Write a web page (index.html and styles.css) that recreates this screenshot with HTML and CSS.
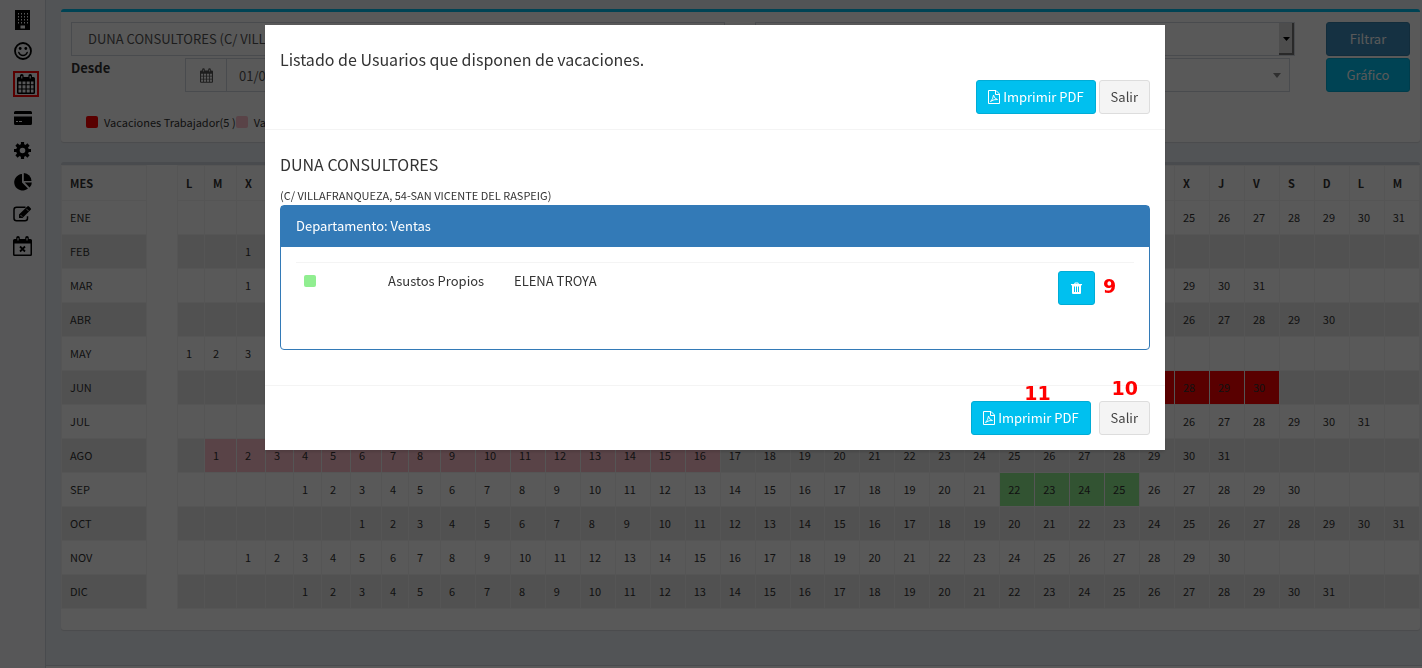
FILE: index.html
```html
<!DOCTYPE html>
<html lang="es">
<head>
<meta charset="utf-8">
<title>Vacaciones</title>
<link rel="stylesheet" href="styles.css">
</head>
<body>
<div class="page">
  <nav class="sidebar" aria-label="Menú principal">
    <a href="#" aria-label="Empresas"><svg width="18" height="20" viewBox="0 0 18 20"><path d="M1 0h15v20H1z"/><g fill="#fff"><path d="M4 3h1v1.500H4zM7 3h1v1.500H7zM10 3h1v1.500H10zM13 3h1v1.500H13zM4 6h1v1.500H4zM7 6h1v1.500H7zM10 6h1v1.500H10zM13 6h1v1.500H13zM4 9h1v1.500H4zM7 9h1v1.500H7zM10 9h1v1.500H10zM13 9h1v1.500H13zM4 12h1v1.500H4zM7 12h1v1.500H7zM10 12h1v1.500H10zM13 12h1v1.500H13zM6.500 15.500h4.500V18.500h-4.500z"/></g></svg></a>
    <a href="#" aria-label="Empleados"><svg width="18" height="18" viewBox="0 0 18 18"><circle cx="9" cy="9" r="8" fill="none" stroke="#000" stroke-width="1.800"/><circle cx="6.200" cy="6.500" r="1.400"/><circle cx="11.800" cy="6.500" r="1.400"/><path d="M4.800 10.500q1.200 3 4.200 3t4.200-3" fill="none" stroke="#000" stroke-width="1.400" stroke-linecap="round"/></svg></a>
    <a href="#" class="active" aria-label="Calendario"><svg width="18" height="20" viewBox="0 0 18 20"><use href="#calendar"/></svg></a>
    <a href="#" aria-label="Tarjetas"><svg width="18" height="14" viewBox="0 0 18 14"><path d="M1.500 0h15Q18 0 18 1.500V3H0V1.500Q0 0 1.500 0zM0 5.500h18v7q0 1.500-1.500 1.500h-15Q0 14 0 12.500z"/><path d="M2 10.500h2M5 10.500h3" stroke="#fff" stroke-width="1"/></svg></a>
    <a href="#" aria-label="Configuración"><svg width="17" height="17" viewBox="0 0 17 17"><circle cx="8.500" cy="8.500" r="4.600" fill="none" stroke="#000" stroke-width="3.600"/><path d="M8.500 0v3M8.500 14v3M0 8.500h3M14 8.500h3M2.500 2.500l2 2M12.500 12.500l2 2M14.500 2.500l-2 2M4.500 12.500l-2 2" stroke="#000" stroke-width="3.200"/></svg></a>
    <a href="#" aria-label="Informes"><svg width="18" height="18" viewBox="0 0 18 18"><path d="M8 1v8.500l6 6A8.300 8.300 0 1 1 8 1z"/><path d="M9.800 0A8 8 0 0 1 17.500 8H9.800z"/><path d="M10.800 9.500h7q0 3.200-2.200 5z"/></svg></a>
    <a href="#" aria-label="Editar"><svg width="19" height="16" viewBox="0 0 19 16"><path d="M12.500 1.200H3.500Q1 1.200 1 3.700v8.500q0 2.500 2.500 2.500H12q2.500 0 2.500-2.500v-2" fill="none" stroke="#000" stroke-width="1.500"/><path d="M6 8.500L14.300.500q.8-.8 1.700 0l1.700 1.700q.8.800 0 1.600L9.500 12H6z"/><path d="M7.500 9l1.800 1.800M13.300 2.800l2.400 2.400" stroke="#fff" stroke-width=".8"/></svg></a>
    <a href="#" aria-label="Ausencias"><svg width="19" height="20" viewBox="0 0 19 20"><path d="M0 4.500Q0 3 1.500 3h16Q19 3 19 4.500v14q0 1.500-1.500 1.500h-16Q0 20 0 18.500zM1.500 7.500v11h16v-11z" fill-rule="evenodd"/><path d="M5 1.800v3M14 1.800v3" stroke="#000" stroke-width="3.600" stroke-linecap="round"/><path d="M5 2v2.500M14 2v2.500" stroke="#fff" stroke-width="1"/><path d="M7 10.500l5 5M12 10.500l-5 5" stroke="#000" stroke-width="1.800"/></svg></a>
  </nav>
  <div class="main">
    <main class="content">
      <section class="box box-info">
        <form class="filters">
          <div class="fields">
            <div class="field-row">
              <select class="control centre" aria-label="Centro"><option>DUNA CONSULTORES (C/ VILLAFRANQUEZA, 54-SAN VICENTE DEL RASPEIG)</option></select>
              <select class="control classic" aria-label="Departamento"><option></option></select>
            </div>
            <div class="field-row second">
              <label class="caption" for="desde">Desde</label>
              <div class="input-group">
                <span class="addon"><svg width="13" height="15" viewBox="0 0 18 20"><use href="#calendar"/></svg></span>
                <input id="desde" class="control" type="text" value="01/01/2018">
              </div>
              <select class="control arrow" aria-label="Tipo"><option></option></select>
            </div>
          </div>
          <div class="actions">
            <button type="button" class="btn primary">Filtrar</button>
            <button type="button" class="btn info">Gráfico</button>
          </div>
        </form>
        <ul class="legend">
          <li><span class="swatch red"></span>Vacaciones Trabajador(5 )</li>
          <li><span class="swatch pink"></span>Vacaciones Empresa(16)</li>
        </ul>
      </section>
      <section class="box box-calendar">
        <table class="calendar">
          <colgroup><col class="month"><col class="spacer"><col class="w27"><col class="w32"><col class="w29"><col class="w28"><col class="w28"><col class="w29"><col class="w31"><col class="w27"><col class="w32"><col span="28"></colgroup>
          <thead><tr id="head"><th scope="col">MES</th><td class="gap"></td></tr></thead>
          <tbody id="months"></tbody>
        </table>
      </section>
    </main>
    <footer class="footer"></footer>
  </div>
</div>

<div class="backdrop">
  <div class="dialog" role="dialog" aria-modal="true" aria-labelledby="title">
    <header class="dialog-head">
      <h4 id="title">Listado de Usuarios que disponen de vacaciones.</h4>
      <div class="buttons">
        <button type="button" class="btn info"><svg width="12" height="14" viewBox="0 0 12 14"><use href="#pdf"/></svg> Imprimir PDF</button>
        <button type="button" class="btn default">Salir</button>
      </div>
    </header>
    <div class="dialog-body">
      <h4>DUNA CONSULTORES</h4>
      <p class="address">(C/ VILLAFRANQUEZA, 54-SAN VICENTE DEL RASPEIG)</p>
      <section class="panel">
        <div class="panel-head">Departamento: Ventas</div>
        <div class="panel-body">
          <div class="person">
            <span class="swatch green"></span>
            <span class="kind">Asustos Propios</span>
            <span class="name">ELENA TROYA</span>
            <div class="marked">
              <button type="button" class="btn info delete" aria-label="Eliminar"><svg width="11" height="12" viewBox="0 0 11 12"><path d="M0 2h3L4 .5h3L8 2h3v1.200h-1V11q0 1-1 1H2q-1 0-1-1V3.200H0zM4.200 2h2.600l-.4-.6H4.600z" fill="#fff" fill-rule="evenodd"/><path d="M3.500 4.500v5.500M5.500 4.500v5.500M7.500 4.500v5.500" stroke="#00c0ef"/></svg></button>
              <b class="mark beside">9</b>
            </div>
          </div>
        </div>
      </section>
    </div>
    <footer class="dialog-foot">
      <div class="marked"><button type="button" class="btn info"><svg width="12" height="14" viewBox="0 0 12 14"><use href="#pdf"/></svg> Imprimir PDF</button><b class="mark over">11</b></div>
      <div class="marked"><button type="button" class="btn default">Salir</button><b class="mark above">10</b></div>
    </footer>
  </div>
</div>

<svg class="symbols" aria-hidden="true">
  <defs>
    <g id="calendar"><path fill="currentColor" d="M0 4.500Q0 3 1.500 3h15Q18 3 18 4.500v14q0 1.500-1.500 1.500h-15Q0 20 0 18.500zM1.500 7.500v2.800h2.800V7.500zm4 0v2.800h3V7.500zm4.200 0v2.800h3V7.500zm4.200 0v2.800h2.600V7.500zM1.500 11.300v3.100h2.800v-3.100zm4 0v3.100h3v-3.100zm4.200 0v3.100h3v-3.100zm4.200 0v3.100h2.600v-3.100zM1.500 15.500v3h2.800v-3zm4 0v3h3v-3zm4.200 0v3h3v-3zm4.200 0v3h2.600v-3z" fill-rule="evenodd"/><path d="M4.800 1.800v3M13.200 1.800v3" stroke="currentColor" stroke-width="3.600" stroke-linecap="round"/><path d="M4.800 2v2.500M13.200 2v2.500" stroke="#fff" stroke-width="1"/></g>
    <g id="pdf" fill="none" stroke="#fff"><path d="M.5.500h7.500l3.500 3.500v9.500H.5zM7.500.500V4.500h4"/><path d="M2.500 11.500Q5 9.500 5.500 5q.5 3.500 4 4.500-3.500-.5-7 2" stroke-width=".9"/></g>
  </defs>
</svg>
<script src="calendar.js"></script>
</body>
</html>
```
FILE: styles.css
```css
* { box-sizing: border-box; }

body {
  margin: 0;
  overflow: hidden;
  color: #333;
  font: 13px/20px "Noto Sans CJK SC", "Noto Sans CJK JP", sans-serif;
}

h4, p, ul { margin: 0; font-weight: 400; }

button, input, select { font: inherit; color: inherit; }

svg { display: block; }

.symbols { position: absolute; width: 0; height: 0; }

.page {
  display: flex;
  height: 100vh;
  overflow: hidden;
  background: #ecf0f5;
}

.sidebar {
  display: flex;
  flex: none;
  flex-direction: column;
  align-items: center;
  width: 46px;
  padding-top: 7px;
  border-right: 1px solid #d2d6de;
  background: #f9fafc;
}

.sidebar a {
  display: grid;
  place-items: center;
  width: 26px;
  height: 26px;
  margin-bottom: 5px;
  color: #000;
}

.sidebar .active {
  margin: 2px 0 8px 6px;
  border: 2px solid #f00;
}

.sidebar .active ~ a { margin-bottom: 6px; }

.main { flex: 1; min-width: 0; }

.content { padding: 9px 2px 15px 15px; }

.box {
  margin-bottom: 20px;
  border-top: 3px solid #d2d6de;
  border-radius: 3px;
  background: #fff;
  box-shadow: 0 1px 1px rgba(0, 0, 0, .1);
}

.box-info {
  padding: 10px;
  border-top-color: #00c0ef;
}

.box-calendar { padding-bottom: 21px; }

.filters { display: flex; }

.fields {
  display: grid;
  flex: 1;
  gap: 2px;
}

.field-row {
  display: flex;
  gap: 30px;
}

.second { padding-right: 5px; }

.control {
  flex: 9;
  min-width: 0;
  height: 34px;
  padding: 0 12px;
  border: 1px solid #d2d6de;
  border-radius: 0;
  background: #fff;
  color: #555;
  appearance: none;
}

.centre { flex: 11; }

select.control { padding-left: 16px; }

.classic {
  background: url("data:image/svg+xml,%3Csvg xmlns='http://www.w3.org/2000/svg' width='15' height='32'%3E%3Crect width='15' height='32' fill='%23777'/%3E%3Crect width='13' height='30' fill='%23ddd'/%3E%3Cpath d='M4 14h7l-3.500 4z'/%3E%3C/svg%3E") right / 15px 32px no-repeat #fff;
}

.arrow {
  background: url("data:image/svg+xml,%3Csvg xmlns='http://www.w3.org/2000/svg' width='8' height='5'%3E%3Cpath d='M0 0h8L4 5z' fill='%23888'/%3E%3C/svg%3E") right 8px center / 8px 5px no-repeat #fff;
}

.caption {
  width: 84px;
  font-weight: 700;
}

.input-group { display: flex; flex: 9; }

.addon {
  display: grid;
  place-items: center;
  width: 41px;
  border: 1px solid #d2d6de;
  border-right: 0;
  color: #555;
}

.actions {
  display: grid;
  gap: 2px;
  width: 84px;
  margin-left: 31px;
}

.btn {
  display: flex;
  align-items: center;
  justify-content: center;
  gap: 3px;
  height: 34px;
  padding: 0 11px;
  border: 1px solid;
  border-radius: 3px;
  color: #fff;
  white-space: nowrap;
}

.primary { border-color: #367fa9; background: #3c8dbc; }
.info { border-color: #00acd6; background: #00c0ef; }
.default { border-color: #ddd; background: #f4f4f4; color: #444; }
.delete { width: 37px; }

.legend {
  display: flex;
  padding: 20px 15px 0;
  list-style: none;
  font-size: 11px;
}

.legend li {
  display: flex;
  align-items: center;
  gap: 6px;
}

.swatch {
  width: 12px;
  height: 12px;
  border-radius: 2px;
}

.red { background: #f00; }
.pink { background: #ffc0cb; }
.green { background: #90ee90; }

.calendar {
  width: 100%;
  border-collapse: collapse;
  table-layout: fixed;
  font-size: 11px;
  line-height: 17px;
}

.month { width: 85px; }
.spacer { width: 31px; }
.w27 { width: 27px; }
.w28 { width: 28px; }
.w29 { width: 29px; }
.w31 { width: 31px; }
.w32 { width: 32px; }

.calendar th,
.calendar td {
  height: 34px;
  padding: 8px;
  border: 1px solid #f4f4f4;
  text-align: left;
  font-weight: 400;
}

.calendar thead th {
  padding-top: 9px;
  font-weight: 700;
}
.calendar tbody tr:nth-child(even) { background: #e7e7e7; }
.calendar .gap { background: #fff; border-top: 0; border-bottom: 0; }
.calendar .red { background: #f00; }
.calendar .pink { background: #ffc0cb; }
.calendar .green { background: #90ee90; }

.footer {
  height: 51px;
  border-top: 1px solid #d2d6de;
  background: #fff;
}

.backdrop {
  position: fixed;
  inset: 0;
  padding: 25px 0 0 8px;
  background: rgba(0, 0, 0, .65);
}

.dialog {
  width: 900px;
  max-width: 100%;
  margin: 0 auto;
  background: #fff;
  box-shadow: 0 2px 3px rgba(0, 0, 0, .125);
}

.dialog-head {
  padding: 24px 15px 15px;
  border-bottom: 1px solid #f4f4f4;
}

h4 { font-size: 16px; }

.buttons {
  display: flex;
  justify-content: flex-end;
  gap: 3px;
  margin-top: 11px;
}

.dialog-body { padding: 24px 15px 35px; }

.address {
  margin-top: 11px;
  font-size: 11px;
}

.panel {
  border: 1px solid #337ab7;
  border-radius: 4px;
}

.panel-head {
  padding: 10px 15px 11px;
  background: #337ab7;
  color: #fff;
}

.panel-body { padding: 15px 15px 44px; }

.person {
  display: flex;
  align-items: flex-start;
  padding: 8px 39px 0 8px;
  border-top: 1px solid #f4f4f4;
}

.person .swatch { margin-top: 4px; }
.kind { width: 126px; margin-left: 72px; }
.name { flex: 1; }

.marked { position: relative; }

.mark {
  position: absolute;
  color: #f00;
  font: 700 19px/20px "DejaVu Sans", sans-serif;
}

.beside { top: 5px; left: 45px; }
.over { top: -18px; left: 53px; }
.above { top: -23px; left: 13px; }

.dialog-foot {
  display: flex;
  justify-content: flex-end;
  gap: 8px;
  padding: 15px;
  border-top: 1px solid #f4f4f4;
}
```
FILE: calendar.js
```js
const months = [
  { name: "ENE", start: 7, days: 31 },
  { name: "FEB", start: 3, days: 28 },
  { name: "MAR", start: 3, days: 31 },
  { name: "ABR", start: 6, days: 30 },
  { name: "MAY", start: 1, days: 30 },
  { name: "JUN", start: 4, days: 30, mark: "red", from: 26, to: 30 },
  { name: "JUL", start: 6, days: 31 },
  { name: "AGO", start: 2, days: 31, mark: "pink", from: 1, to: 16 },
  { name: "SEP", start: 5, days: 30, mark: "green", from: 22, to: 25 },
  { name: "OCT", start: 7, days: 31 },
  { name: "NOV", start: 3, days: 30 },
  { name: "DIC", start: 5, days: 31 }
];
const columns = 37;
const head = document.getElementById("head");
const body = document.getElementById("months");

for (let i = 0; i < columns; i++) {
  const th = document.createElement("th");
  th.scope = "col";
  th.textContent = "LMXJVSD"[i % 7];
  head.append(th);
}

months.forEach((month, index) => {
  const row = body.insertRow();
  const th = document.createElement("th");
  th.scope = "row";
  th.textContent = month.name;
  row.append(th);
  // One spacer cell runs down the whole body.
  if (index === 0) {
    const gap = row.insertCell();
    gap.className = "gap";
    gap.rowSpan = months.length;
  }
  for (let column = 1; column <= columns; column++) {
    const cell = row.insertCell();
    const day = column - month.start + 1;
    if (day < 1 || day > month.days) continue;
    cell.textContent = day;
    if (month.mark && day >= month.from && day <= month.to) cell.className = month.mark;
  }
});
```
